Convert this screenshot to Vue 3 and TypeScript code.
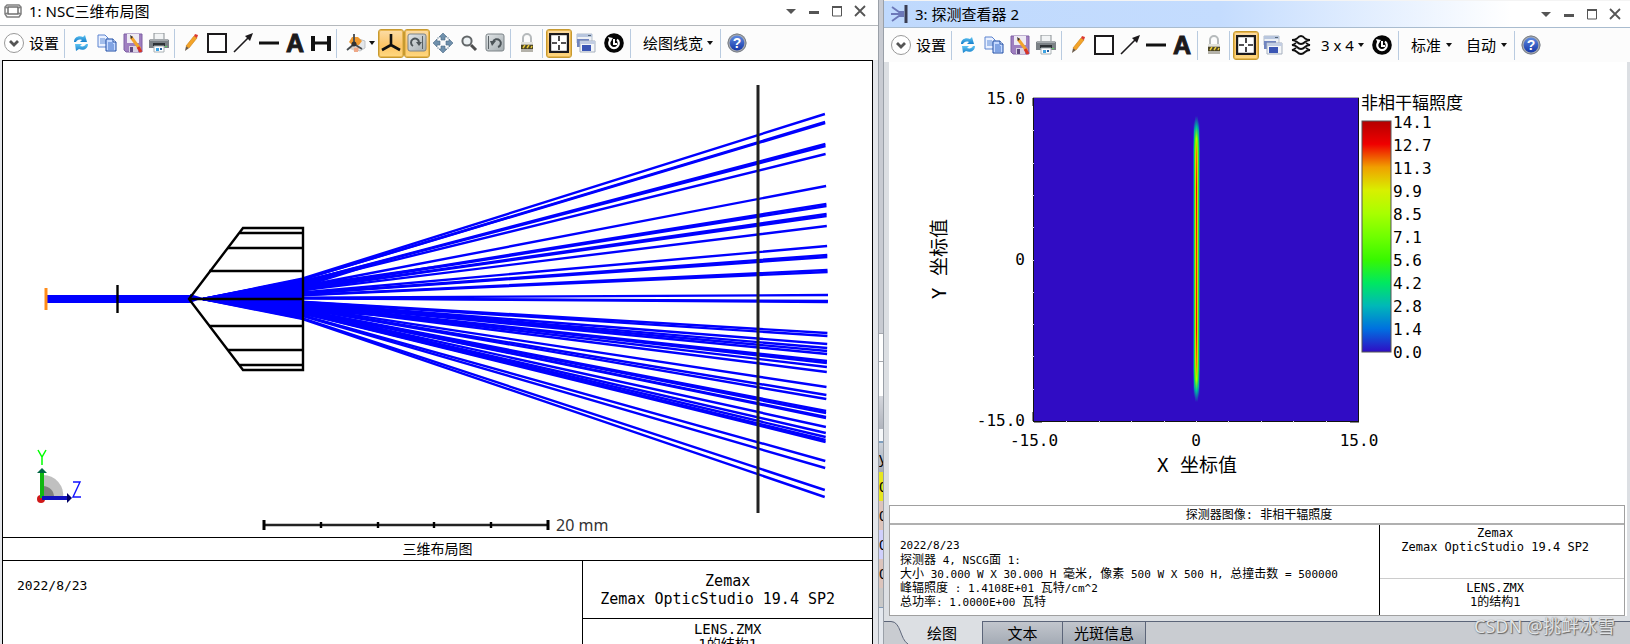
<script setup lang="ts">
import { ref } from 'vue'

interface Tool {
  kind: 'icon' | 'sep' | 'menu' | 'select'
  icon?: string
  glyph?: string
  label?: string
  on?: boolean
  wide?: boolean
}

const icon = (name: string, label: string, extra: Partial<Tool> = {}): Tool => ({ kind: 'icon', icon: name, label, ...extra })
const sep: Tool = { kind: 'sep' }

const fileTools: Tool[] = [
  sep,
  icon('refresh', '更新'),
  icon('copy', '复制'),
  icon('save', '保存'),
  icon('print', '打印'),
  sep,
  icon('pencil', '画笔'),
  icon('square', '矩形'),
  icon('arrow', '箭头'),
  icon('line', '直线'),
  { kind: 'icon', glyph: 'A', label: '文字' },
]

const layoutTools: Tool[] = [
  ...fileTools,
  icon('measure', '测量'),
  sep,
  { kind: 'menu', icon: 'orient', label: '' },
  icon('axes', '坐标轴', { on: true }),
  icon('rotate', '旋转', { on: true }),
  icon('move', '平移'),
  icon('zoom', '缩放'),
  icon('reset', '复位'),
  sep,
  icon('lock', '锁定'),
  sep,
  icon('fit', '适应窗口', { on: true }),
  icon('windows', '窗口', { wide: true }),
  icon('power', '活动', { wide: true }),
  sep,
  { kind: 'menu', label: '绘图线宽' },
  sep,
  icon('help', '帮助', { glyph: '?' }),
]

const detectorTools: Tool[] = [
  ...fileTools,
  sep,
  icon('lock', '锁定'),
  sep,
  icon('fit', '适应窗口', { on: true }),
  icon('windows', '窗口', { wide: true }),
  icon('layers', '图层', { wide: true }),
  { kind: 'select', label: '3 x 4', wide: true },
  icon('power', '活动', { wide: true }),
  sep,
  { kind: 'select', label: '标准' },
  { kind: 'select', label: '自动' },
  sep,
  icon('help', '帮助', { glyph: '?' }),
]

const controls = [
  { icon: 'c-menu', label: '菜单' },
  { icon: 'c-min', label: '最小化' },
  { icon: 'c-max', label: '最大化' },
  { icon: 'c-close', label: '关闭' },
]

const rayEnds = [
  114, 122, 123, 144, 146, 154, 186, 204, 206, 214, 216, 226, 246, 255, 257, 270, 272, 295, 301, 302,
  333, 336, 344, 348, 351, 354, 361, 363, 367, 372, 387, 395, 399, 411, 413, 417, 418, 427, 433, 437, 440,
  442, 461, 468, 490, 497,
]
const rays = rayEnds.map((y) => {
  const d = y - 298
  const exitY = 298 + d * 0.105
  const endX = 828 - Math.abs(d) / 60
  return `203,299 302,${exitY.toFixed(1)} ${endX.toFixed(1)},${y}`
})

const legend = ['14.1', '12.7', '11.3', '9.9', '8.5', '7.1', '5.6', '4.2', '2.8', '1.4', '0.0']
const ticks = [1, 2, 3, 4, 5, 6, 7, 8, 9]

const rampStops = ['#b40000', '#f00000', '#f0a000', '#d8f000', '#a8ff00', '#70ff00', '#38f800', '#00e860', '#00b8b8', '#0070e0', '#300cc4']

const detectorInfo = [
  '2022/8/23',
  '探测器 4, NSCG面 1:',
  '大小 30.000 W X 30.000 H 毫米, 像素 500 W X 500 H, 总撞击数 = 500000',
  '峰辐照度 : 1.4108E+01 瓦特/cm^2',
  '总功率: 1.0000E+00 瓦特',
]
// Han runs are set one size larger than the Latin text around them.
const isHan = (s: string) => /[\u4e00-\u9fff]/.test(s)
const infoRuns = detectorInfo.map((line) => line.match(/[\u4e00-\u9fff]+|[^\u4e00-\u9fff]+/g) ?? [])

const tabs = ['绘图', '文本', '光斑信息']
const activeTab = ref(0)
</script>

<template>
  <svg class="defs" aria-hidden="true">
    <defs>
      <linearGradient id="g-blue" x1="0" y1="0" x2="0" y2="1">
        <stop offset="0" stop-color="#5fc4f2" /><stop offset="1" stop-color="#1680cc" />
      </linearGradient>
      <linearGradient id="g-help" x1="0" y1="0" x2="0" y2="1">
        <stop offset="0" stop-color="#5f8ae0" /><stop offset="1" stop-color="#1638a8" />
      </linearGradient>
      <linearGradient id="g-panel" x1="0" y1="0" x2="1" y2="1">
        <stop offset="0" stop-color="#e2e6e8" /><stop offset="1" stop-color="#a4acb0" />
      </linearGradient>
    </defs>
    <symbol id="expand" viewBox="0 0 20 20">
      <circle cx="10" cy="10" r="9.500" fill="#fff" stroke="#999" />
      <path d="M6 8l4 4 4-4" fill="none" stroke="#555" stroke-width="2.8" />
    </symbol>
    <symbol id="refresh" viewBox="0 0 20 20">
      <path d="M3 9C3 4 8 2 12 4l2-2 2 7h-7l2-2C8 6 6 7 5 9z" fill="url(#g-blue)" />
      <path d="M17 11c0 5-5 7-9 5l-3 2-1-7h7l-2 2c3 1 5 0 6-2z" fill="url(#g-blue)" />
    </symbol>
    <symbol id="copy" viewBox="0 0 20 20">
      <path d="M1 2h7l3 3v9H1z" fill="#eaf1ff" stroke="#5c84d0" />
      <path d="M3 6h5M3 8h6M3 10h6" stroke="#5f8cd8" />
      <path d="M9 6h7l3 3v9H9z" fill="#c6daff" stroke="#1f4ca4" />
      <path d="M11 10h5M11 12h6M11 14h6M11 16h6" stroke="#3c6fc8" />
      <path d="M16 6v3h3" fill="#fff" stroke="#1f4ca4" />
    </symbol>
    <symbol id="save" viewBox="0 0 20 20">
      <path d="M1 1h18v18H3l-2-2z" fill="#9f7fc0" stroke="#7e60a4" />
      <path d="M4 1h12v9H4z" fill="#eeeaf4" />
      <path d="M6 13h9v6H6z" fill="#d9d2e4" /><path d="M7 14h3v5H7z" fill="#604a80" />
      <path d="M8 4l9 12" stroke="#f2a32c" stroke-width="3" /><path d="M15 14l3 5" stroke="#d83324" stroke-width="3" />
      <path d="M7 2l3 2-2 2z" fill="#333" />
    </symbol>
    <symbol id="print" viewBox="0 0 20 20">
      <path d="M5 0h10v7H5z" fill="#f2f4f5" stroke="#8a9094" />
      <path d="M0 7l2-1h16l2 1v8H0z" fill="#7b8186" /><path d="M1 6h18v2H1z" fill="#a4a9ad" />
      <path d="M4 10h12v3H4z" fill="#2d3236" />
      <path d="M5 13h10v6H5z" fill="#fff" stroke="#a8b0b4" />
      <path d="M7 15h3v3H7z" fill="#3ba3e4" /><path d="M11 15h2v2h-2z" fill="#245fa0" /><path d="M16 13h2v1h-2z" fill="#5bd060" />
    </symbol>
    <symbol id="pencil" viewBox="0 0 20 20">
      <path d="M4 18l1-5 3 2z" fill="#6a5a4a" />
      <path d="M5 13l8-10 3 2-8 10z" fill="#f4a428" stroke="#c87c14" stroke-width=".6" />
      <path d="M13 3l1-2 3 1-1 3z" fill="#dc3a30" />
    </symbol>
    <symbol id="square" viewBox="0 0 20 20">
      <rect x="1" y="1" width="18" height="18" fill="#fff" stroke="#1c1a1c" stroke-width="2" />
    </symbol>
    <symbol id="arrow" viewBox="0 0 20 20">
      <path d="M1 19L15 5" stroke="#1c1a1c" stroke-width="1.6" /><path d="M20 0l-3 8-5-5z" fill="#1c1a1c" />
    </symbol>
    <symbol id="line" viewBox="0 0 20 20"><path d="M0 10h20" stroke="#111" stroke-width="3" /></symbol>
    <symbol id="measure" viewBox="0 0 20 20">
      <path d="M2 3v15M18 3v15" stroke="#111" stroke-width="4" /><path d="M2 10h16" stroke="#111" stroke-width="3" />
    </symbol>
    <symbol id="orient" viewBox="0 0 20 20">
      <path d="M7 9l6-3 6 2v7l-5 3-6-2z" fill="#e4e7ea" stroke="#b4b8bc" stroke-width=".8" />
      <path d="M3 9l3-5 6 0 4 4-3 4-6 1z" fill="#f09a30" /><path d="M5 13l5 1-1 4-5-2z" fill="#d8d0c8" /><path d="M8 15l5-1-1 5-4 0z" fill="#efa888" />
      <path d="M8 1v10l-7 6M8 11l8 5" fill="none" stroke="#454a4e" stroke-width="1.8" />
      <circle cx="8" cy="11" r="2.500" fill="#333" />
    </symbol>
    <symbol id="axes" viewBox="0 0 20 20">
      <path d="M10 1v11L1 17M10 12l9 5" fill="none" stroke="#111" stroke-width="2.6" />
    </symbol>
    <symbol id="rotate" viewBox="0 0 20 20">
      <rect x="1" y="1" width="18" height="17" rx="2" fill="url(#g-panel)" stroke="#7c8488" />
      <path d="M6 13a4 4 0 1 1 6-4" fill="none" stroke="#4c5458" stroke-width="2" />
      <path d="M9 9h6l-3 4z" fill="#4c5458" /><path d="M15.500 3v13" stroke="#596165" />
    </symbol>
    <symbol id="move" viewBox="0 0 20 20">
      <g fill="#6f90ac" stroke="#4c6a84" stroke-width=".6">
        <path d="M10 0l4 4h-2v3H8V4H6z" /><path d="M10 20l4-4h-2v-3H8v3H6z" />
        <path d="M0 10l4-4v2h3v4H4v2z" /><path d="M20 10l-4-4v2h-3v4h3v2z" />
      </g>
      <path d="M4 4h2v2H4zM14 4h2v2h-2zM4 14h2v2H4zM14 14h2v2h-2z" fill="#c4ced6" />
    </symbol>
    <symbol id="zoom" viewBox="0 0 20 20">
      <circle cx="8" cy="8" r="4.600" fill="#edf2f4" stroke="#636769" stroke-width="2" />
      <path d="M12 12l5 5" stroke="#4e4e4e" stroke-width="3" />
    </symbol>
    <symbol id="reset" viewBox="0 0 20 20">
      <rect x="1" y="1" width="18" height="17" rx="2" fill="url(#g-panel)" stroke="#7c8488" />
      <path d="M8 9a4 4 0 1 1 5 5" fill="none" stroke="#4c5458" stroke-width="2" />
      <path d="M5 8h6l-4 5z" fill="#4c5458" /><path d="M3.500 3v13" stroke="#596165" />
    </symbol>
    <symbol id="lock" viewBox="0 0 20 20">
      <path d="M6 10V5a4 4 0 0 1 8 0v5" fill="none" stroke="#b6babc" stroke-width="2" />
      <path d="M4 9h12v10H4z" fill="#b4b2aa" /><path d="M4 12h12v4H4z" fill="#4b4524" />
      <path d="M6 15l2-3M10 15l2-3M14 15l1-2" stroke="#e8c83a" stroke-width="1.500" /><path d="M4 10h12" stroke="#e2e2dc" stroke-width="2" />
    </symbol>
    <symbol id="fit" viewBox="0 0 20 20">
      <rect x="1" y="1" width="18" height="18" fill="#fff" stroke="#1c1a1c" stroke-width="2.400" />
      <path d="M10 3v5M10 12v5M3 10h5M12 10h5" stroke="#1c1a1c" stroke-width="1.600" />
    </symbol>
    <symbol id="windows" viewBox="0 0 20 20">
      <path d="M1 1h15v9H1z" fill="#eef1f5" stroke="#b5bfcc" /><path d="M1 1h15v3H1z" fill="#b8c6de" /><path d="M12 2h3v1h-3z" fill="#567" />
      <path d="M1 6h12v8H1z" fill="#7185c0" />
      <path d="M4 8h15v11H4z" fill="#f4f6f8" stroke="#a5afbe" /><path d="M4 8h15v3H4z" fill="#c2cde2" /><path d="M6 12h9v6H6z" fill="#3b56b4" />
    </symbol>
    <symbol id="layers" viewBox="0 0 20 20">
      <g fill="none" stroke="#111" stroke-width="1.800">
        <path d="M1 5q3 0 5-1.500Q8 1 10 1t4 2.500Q16 5 19 5q-3 0-5 2-2 2-4 2T6 7Q4 5 1 5z" />
        <path d="M5 8q-2 1.500-4 2 3 0 5 2 2 2 4 2t4-2q2-2 5-2-2-.5-4-2" />
        <path d="M5 13q-2 1.500-4 2 3 0 5 2 2 2 4 2t4-2q2-2 5-2-2-.5-4-2" />
      </g>
    </symbol>
    <symbol id="power" viewBox="0 0 20 20">
      <circle cx="10" cy="10" r="9.800" fill="#050505" />
      <path d="M7 6.500a4.800 4.800 0 1 0 6 0" fill="none" stroke="#fff" stroke-width="2.200" />
      <path d="M4 4l5 1-3 4z" fill="#fff" /><path d="M10 6v5h3" fill="none" stroke="#fff" stroke-width="2" />
    </symbol>
    <symbol id="help" viewBox="0 0 20 20">
      <circle cx="10" cy="10" r="9.500" fill="#a6aab0" /><circle cx="10" cy="10" r="9" fill="none" stroke="#7b8088" />
      <circle cx="10" cy="10" r="7.400" fill="url(#g-help)" />
    </symbol>
    <symbol id="w-layout" viewBox="0 0 20 20">
      <rect x="5" y="6" width="10" height="7" fill="#fff" stroke="#666" stroke-width="1.400" />
      <path d="M4 4h12l2 2v7l-2 3H4l-2-3V6zM2 6l3 1M18 6l-3 1M2 13l3-1M18 13l-3-1" fill="none" stroke="#808080" stroke-width="1.500" />
    </symbol>
    <symbol id="w-detector" viewBox="0 0 20 20">
      <path d="M17 1v18" stroke="#3a3d52" stroke-width="3" />
      <path d="M3 3l7 5h5M2 10h13M3 17l7-5h5" fill="none" stroke="#6c78b8" stroke-width="1.800" />
    </symbol>
    <symbol id="c-menu" viewBox="0 0 20 20"><path d="M5 8h10l-5 5z" fill="#555" /></symbol>
    <symbol id="c-min" viewBox="0 0 20 20"><path d="M5 11.500h10" stroke="#555" stroke-width="3" /></symbol>
    <symbol id="c-max" viewBox="0 0 20 20"><path d="M5.500 6v9h9V6" fill="none" stroke="#555" /><path d="M5 6h10" stroke="#555" stroke-width="2" /></symbol>
    <symbol id="c-close" viewBox="0 0 20 20"><path d="M5 5l10 10M15 5L5 15" stroke="#555" stroke-width="1.800" /></symbol>
  </svg>

  <main class="desk">
    <section class="win win-layout">
      <header class="title">
        <svg class="ico"><use href="#w-layout" /></svg>
        <h1>1: NSC三维布局图</h1>
        <button v-for="c in controls" :key="c.icon" class="ctl" :aria-label="c.label"><svg class="ico"><use :href="'#' + c.icon" /></svg></button>
      </header>
      <nav class="tools">
        <button class="settings"><svg class="ico"><use href="#expand" /></svg>设置</button>
        <template v-for="(t, i) in layoutTools" :key="i">
          <span v-if="t.kind === 'sep'" class="sep"></span>
          <button v-else-if="t.kind === 'icon'" class="tool" :class="{ on: t.on, wide: t.wide }" :aria-label="t.label"><svg v-if="t.icon" class="ico"><use :href="'#' + t.icon" /></svg><b v-if="t.glyph" :class="t.icon ? 'badge' : 'glyph'">{{ t.glyph }}</b></button>
          <button v-else class="menu" :class="{ pic: t.icon }" aria-haspopup="menu" :aria-label="t.label || '视图方向'"><svg v-if="t.icon" class="ico"><use :href="'#' + t.icon" /></svg>{{ t.label }}<i class="caret"></i></button>
        </template>
      </nav>
      <div class="sheet">
        <svg class="scene" viewBox="3 61 869 476" role="img" aria-label="三维布局图">
          <g fill="none" stroke="#00f" stroke-width="2.400">
            <path d="M47 299h144" stroke-width="8" />
            <path d="M190 294l13 4-13 5z" fill="#00f" stroke="none" />
            <polyline v-for="(r, i) in rays" :key="i" :points="r" />
            <path d="M203 299L302 279v39z" fill="#00f" stroke-width="1" />
            <path d="M302 280L400 257 302 288zM302 285L440 265 302 292zM302 303L460 322 302 311zM302 308L440 343 302 315z" fill="#00f" stroke="none" />
          </g>
          <path d="M46 288v22" stroke="#ff8c1a" stroke-width="3" />
          <g fill="none" stroke="#000" stroke-width="2.400">
            <path d="M117.500 285v28" />
            <path d="M189 299L243 228h60v142h-60z" />
            <path d="M240 233h62M228 248h74M209 271h93M189 299h113M209 326h93M228 350h74M240 365h62" />
            <path d="M758 85v428" stroke="#222" stroke-width="3" />
            <path d="M263 525h285" stroke="#222" /><path d="M264 520v10M548 520v10" stroke-width="3" /><path d="M321 522v6M378 522v6M434 522v6M491 522v6" />
          </g>
          <path d="M43 498V475a20 20 0 0 1 20 23z" fill="#c0c0c0" /><path d="M43 498v-12a11 11 0 0 1 11 12z" fill="#808080" />
          <circle cx="41" cy="499" r="4" fill="#d01818" />
          <path d="M42 498V472" stroke="#10b810" stroke-width="4" /><path d="M37 473l5-5 5 5z" fill="#064" />
          <path d="M42 498h26" stroke="#1010c0" stroke-width="4" /><path d="M67 493l5 5-5 5z" fill="#006" />
          <path d="M38 450l4 7 4-7M42 456v9" fill="none" stroke="#0f0" stroke-width="1.500" />
          <path d="M73 482h7l-7 15h8" fill="none" stroke="#11f" stroke-width="1.400" />
          <text x="556" y="531" class="scale">20 mm</text>
        </svg>
        <div class="cap">三维布局图</div>
        <div class="foot">
          <div class="when">2022/8/23</div>
          <div class="ident">
            <div class="maker">
              <p>Zemax</p>
              <p class="product">Zemax OpticStudio 19.4 SP2</p>
            </div>
            <p class="file">LENS.ZMX<br />1的结构1</p>
          </div>
        </div>
      </div>
    </section>

    <aside class="behind" aria-hidden="true">
      <span class="b0"></span><span class="b1"></span><span class="b2"></span><span class="b3"></span><span class="b4"></span>
      <span class="b5">y</span><span class="row yel">0</span><span class="row pnk">0</span><span class="row lav">0</span><span class="row pnk">0</span>
      <span class="b6"></span><span class="b7"></span>
    </aside>

    <section class="win win-detector">
      <header class="title">
        <svg class="ico"><use href="#w-detector" /></svg>
        <h1>3: 探测查看器 2</h1>
        <button v-for="c in controls" :key="c.icon" class="ctl" :aria-label="c.label"><svg class="ico"><use :href="'#' + c.icon" /></svg></button>
      </header>
      <nav class="tools">
        <button class="settings"><svg class="ico"><use href="#expand" /></svg>设置</button>
        <template v-for="(t, i) in detectorTools" :key="i">
          <span v-if="t.kind === 'sep'" class="sep"></span>
          <button v-else-if="t.kind === 'icon'" class="tool" :class="{ on: t.on, wide: t.wide }" :aria-label="t.label"><svg v-if="t.icon" class="ico"><use :href="'#' + t.icon" /></svg><b v-if="t.glyph" :class="t.icon ? 'badge' : 'glyph'">{{ t.glyph }}</b></button>
          <label v-else class="menu" :class="{ near: t.wide }"><select :aria-label="t.label"><option>{{ t.label }}</option></select><i class="caret"></i></label>
        </template>
      </nav>
      <div class="page">
        <svg class="plot" viewBox="889 62 738 443" role="img" aria-label="非相干辐照度">
          <defs>
            <linearGradient id="ramp" x1="0" y1="0" x2="0" y2="1">
              <stop v-for="(c, i) in rampStops" :key="c" :offset="i / 10" :stop-color="c" />
            </linearGradient>
            <linearGradient id="edge" x1="0" y1="0" x2="0" y2="1">
              <stop offset="0" stop-color="#300cc4" /><stop offset=".1" stop-color="#1a60c8" /><stop offset=".9" stop-color="#1a60c8" /><stop offset="1" stop-color="#300cc4" />
            </linearGradient>
            <linearGradient id="mid" x1="0" y1="0" x2="0" y2="1">
              <stop offset="0" stop-color="#300cc4" /><stop offset=".04" stop-color="#00b0a8" /><stop offset=".1" stop-color="#20e830" /><stop offset=".9" stop-color="#20e830" /><stop offset=".96" stop-color="#00b0a8" /><stop offset="1" stop-color="#300cc4" />
            </linearGradient>
            <linearGradient id="warm" x1="0" y1="0" x2="0" y2="1">
              <stop offset="0" stop-color="#300cc4" /><stop offset=".04" stop-color="#00a8a8" /><stop offset=".08" stop-color="#70f800" /><stop offset=".15" stop-color="#e8c800" /><stop offset=".85" stop-color="#e8c800" /><stop offset=".92" stop-color="#70f800" /><stop offset=".96" stop-color="#00a8a8" /><stop offset="1" stop-color="#300cc4" />
            </linearGradient>
            <linearGradient id="hot" x1="0" y1="0" x2="0" y2="1">
              <stop offset="0" stop-color="#300cc4" /><stop offset=".04" stop-color="#00c890" /><stop offset=".08" stop-color="#b0f800" /><stop offset=".13" stop-color="#f08000" /><stop offset=".25" stop-color="#f00c00" /><stop offset=".5" stop-color="#f03000" /><stop offset=".75" stop-color="#f00c00" /><stop offset=".87" stop-color="#f08000" /><stop offset=".92" stop-color="#b0f800" /><stop offset=".96" stop-color="#00c890" /><stop offset="1" stop-color="#300cc4" />
            </linearGradient>
          </defs>
          <rect x="1033" y="97" width="326" height="325" fill="#111" />
          <path d="M1033 97.500h326" stroke="#aaa" />
          <rect x="1034" y="98" width="324" height="323" fill="#300cc4" />
          <path v-for="t in ticks" :key="t" :d="`M${Math.round(1034 + t * 32.4)}.5 421v2M1032 ${Math.round(98 + t * 32.3)}.5h2`" stroke="#ddd" />
          <path d="M1034 422.500h8M1350 422.500h9M1032.500 98v8M1032.500 412v9" stroke="#888" />
          <rect x="1193" y="122" width="7" height="274" fill="url(#edge)" />
          <rect x="1194" y="120" width="5" height="278" fill="url(#mid)" />
          <rect x="1195" y="116" width="3" height="286" fill="url(#warm)" />
          <rect x="1196" y="116" width="1" height="286" fill="url(#hot)" />
          <rect x="1362" y="121" width="29" height="231" fill="url(#ramp)" stroke="#555" />
          <g class="num">
            <text x="1025" y="104" text-anchor="end">15.0</text>
            <text x="1025" y="265" text-anchor="end">0</text>
            <text x="1025" y="426" text-anchor="end">-15.0</text>
            <text x="1034" y="446" text-anchor="middle">-15.0</text>
            <text x="1196" y="446" text-anchor="middle">0</text>
            <text x="1359" y="446" text-anchor="middle">15.0</text>
            <text v-for="(v, i) in legend" :key="v" x="1393" :y="128 + i * 23">{{ v }}</text>
          </g>
          <text x="1361" y="109" class="unit">非相干辐照度</text>
          <text x="1197" y="472" text-anchor="middle" class="axis">X 坐标值</text>
          <text transform="translate(946 259) rotate(-90)" text-anchor="middle" class="axis">Y 坐标值</text>
        </svg>
        <div class="report">
          <div class="rcap">探测器图像: 非相干辐照度</div>
          <div class="rbody">
            <div class="lines"><p v-for="(runs, i) in infoRuns" :key="i"><span v-for="(r, j) in runs" :key="j" :class="{ han: isHan(r) }">{{ r }}</span></p></div>
            <div class="rident">
              <p class="rmaker">Zemax<br />Zemax OpticStudio 19.4 SP2</p>
              <p class="rfile">LENS.ZMX<br />1的结构1</p>
            </div>
          </div>
        </div>
      </div>
      <div class="tabs" role="tablist">
        <button v-for="(t, i) in tabs" :key="t" role="tab" class="tab" :class="{ active: i === activeTab, first: i === 0 }" :aria-selected="i === activeTab" @click="activeTab = i">
          <svg v-if="i === 0" class="curve" viewBox="0 0 26 23"><path d="M0 0h7c10 0 9 23 19 23H0z" fill="#c9ccd1" /><path d="M0 .5h7c10 0 9 18 17 22.500" fill="none" stroke="#5c6579" /></svg>{{ t }}
        </button>
      </div>
      <div class="mark">CSDN @挑衅冰雪</div>
    </section>
  </main>
</template>

<style>
body {
  margin: 0;
  overflow: hidden;
}
</style>

<style scoped>
.defs {
  position: absolute;
  width: 0;
  height: 0;
}
.desk {
  display: flex;
  height: 100vh;
  overflow: hidden;
  background: #e4e6ea;
  color: #000;
  font: 15px/20px "Noto Sans", "Noto Sans CJK SC", sans-serif;
}
button,
select {
  font: inherit;
  color: inherit;
  background: none;
  border: 0;
  padding: 0;
  margin: 0;
}
p,
h1 {
  margin: 0;
}
.ico {
  display: block;
  width: 20px;
  height: 20px;
  flex: none;
}
.win {
  display: flex;
  flex-direction: column;
  min-width: 0;
  position: relative;
}
.win-layout {
  flex: 878 1 0;
}
.win-detector {
  flex: 746 1 0;
  background: #dcdfe3;
}
.title {
  display: flex;
  align-items: center;
  box-sizing: border-box;
  height: 26px;
  padding: 0 7px 3px 3px;
  background: #fff;
  border-bottom: 1px solid #b4b8bc;
}
.win-detector .title {
  height: 28px;
  padding: 0 4px 1px 5px;
  background: linear-gradient(90deg, #bfd9fd 0, #c4dcfe 45%, #fff 84%);
  border-top: 1px solid #f4f4f4;
  border-bottom-color: #a9bccf;
}
.title h1 {
  flex: 1;
  margin-left: 6px;
  font-size: 15px;
  font-weight: 400;
  white-space: nowrap;
}
.ctl {
  display: flex;
  justify-content: center;
  width: 23px;
}
.tools {
  display: flex;
  align-items: center;
  height: 34px;
  flex: none;
  background: #fcfcfc;
  padding-left: 1px;
}
.win-detector .tools {
  padding-left: 4px;
}
.settings {
  display: flex;
  align-items: center;
  gap: 5px;
  padding: 0 3px;
  white-space: nowrap;
}
.sep {
  width: 1px;
  height: 29px;
  margin: 0 3px 0 2px;
  background: #b9cbe0;
}
.tool {
  display: flex;
  align-items: center;
  justify-content: center;
  box-sizing: border-box;
  position: relative;
  width: 26px;
  height: 29px;
  border: 1px solid transparent;
  border-radius: 3px;
}
.wide {
  width: 28px;
}
.glyph {
  font: 700 25px/25px "Liberation Sans", sans-serif;
  -webkit-text-stroke: 1px #1c1a1c;
  color: #1c1a1c;
}
.badge {
  position: absolute;
  inset: 0;
  font: 700 14px/27px "Liberation Sans", sans-serif;
  text-align: center;
  color: #fff;
}
.tool.on {
  border: 1px solid #c79a30;
  background: linear-gradient(#fbdca6, #fdc464 60%, #fed982);
  box-shadow: inset 0 0 0 1px #e8b650;
}
.menu {
  display: flex;
  align-items: center;
  gap: 4px;
  padding: 0 5px 0 9px;
  white-space: nowrap;
}
.menu.pic {
  gap: 3px;
  padding: 0 3px 0 6px;
}
.menu.near {
  padding: 0 4px 0 6px;
}
.menu select {
  appearance: none;
}
.caret {
  border: 3px solid transparent;
  border-top: 4px solid #111;
  border-bottom: 0;
}
.sheet {
  flex: 1;
  display: flex;
  flex-direction: column;
  min-height: 0;
  margin: 0 5px 0 2px;
  border: 1px solid #000;
  border-bottom: 0;
  background: #fff;
  font-family: "DejaVu Sans Mono", "Noto Sans CJK SC", monospace;
}
.scene,
.plot {
  display: block;
  flex: 1;
  width: 100%;
  min-height: 0;
}
.scale {
  font: 16px "Noto Sans", sans-serif;
  fill: #333;
}
.cap {
  height: 22px;
  line-height: 22px;
  border-top: 1px solid #000;
  border-bottom: 1px solid #000;
  text-align: center;
  font-size: 14px;
}
.foot {
  display: grid;
  grid-template-columns: 2fr 1fr;
  height: 83px;
}
.when {
  padding: 15px 14px;
  font-size: 13px;
}
.ident {
  box-sizing: border-box;
  border-left: 1px solid #000;
  text-align: center;
  white-space: nowrap;
}
.maker {
  box-sizing: border-box;
  height: 58px;
  padding-top: 11px;
  font-size: 15px;
  line-height: 18px;
  border-bottom: 1px solid #000;
}
.product {
  padding-right: 20px;
}
.file {
  padding-top: 3px;
  font-size: 14px;
  line-height: 15px;
}
.behind {
  display: flex;
  flex-direction: column;
  box-sizing: border-box;
  width: 6px;
  flex: none;
  overflow: hidden;
  border-left: 1px solid #9aa0a8;
  border-right: 1px solid #9aa0a8;
  background: #e4e8ee;
  line-height: 29px;
}
.behind span {
  box-sizing: border-box;
  overflow: hidden;
  flex: none;
}
.b0 {
  height: 333px;
  background: #c8cbd2;
}
.b1,
.b2 {
  height: 28px;
  background: #fff;
  border-top: 1px solid #a5a8ae;
}
.b2 {
  height: 35px;
}
.b3 {
  height: 33px;
  background: linear-gradient(#d4d6dc, #b0b4bd);
}
.b4 {
  height: 14px;
  background: #f6f8fa;
  border-bottom: 2px solid #7fa0c0;
}
.b5 {
  height: 29px;
  background: linear-gradient(#ccd2da, #a6abb5);
}
.row {
  height: 29px;
}
.yel {
  background: #e6e620;
}
.pnk {
  background: #dcc4bc;
}
.lav {
  background: #d0d0fc;
}
.b6 {
  height: 20px;
  background: #c8c8c8;
  border-bottom: 1px solid #7f9ab8;
}
.b7 {
  height: 36px;
}
.page {
  flex: 1;
  display: flex;
  flex-direction: column;
  min-height: 0;
  margin: 0 3px 5px 5px;
  background: #fff;
  font-family: "DejaVu Sans Mono", "Noto Sans CJK SC", monospace;
}
.num {
  font-size: 16px;
}
.unit {
  font-size: 17px;
}
.axis {
  font-size: 19px;
}
.report {
  margin-right: 2px;
  border: 1px solid #a0a0a0;
  font-size: 12px;
}
.rcap {
  height: 17px;
  line-height: 18px;
  padding-left: 4px;
  text-align: center;
  border-bottom: 2px solid #b0b0b0;
}
.rbody {
  display: grid;
  grid-template-columns: 2fr 1fr;
  height: 90px;
}
.lines {
  padding: 14px 0 0 10px;
  font-size: 11px;
  line-height: 14px;
  white-space: pre;
}
.lines p {
  height: 14px;
}
.han {
  font-size: 12px;
}
.rident {
  border-left: 1px solid #000;
  text-align: center;
  line-height: 14px;
  white-space: nowrap;
}
.rmaker {
  box-sizing: border-box;
  height: 54px;
  padding: 1px 14px 0 0;
  border-bottom: 1px solid #ccc;
}
.rfile {
  padding: 2px 14px 0 0;
}
.tabs {
  display: flex;
  box-sizing: border-box;
  height: 23px;
  background: #c9ccd1;
  border-top: 1px solid #5c6579;
}
.tab {
  padding: 0 11px;
  border-right: 1px solid #5c6579;
  background: linear-gradient(#c2c6cd, #a4abb5);
  min-width: 80px;
}
.tab.first {
  position: relative;
  width: 99px;
  padding: 0 0 0 18px;
  margin-top: -1px;
}
.tab.active {
  background: #dcdfe3;
}
.curve {
  position: absolute;
  left: 0;
  top: 0;
  width: 26px;
  height: 23px;
}
.mark {
  position: absolute;
  right: 15px;
  bottom: 5px;
  font: 18px/26px "Noto Sans", "Noto Sans CJK SC", sans-serif;
  color: #e2e4e6;
  text-shadow: 1px 1px 1px #666, 0 0 1px #777;
}
</style>
